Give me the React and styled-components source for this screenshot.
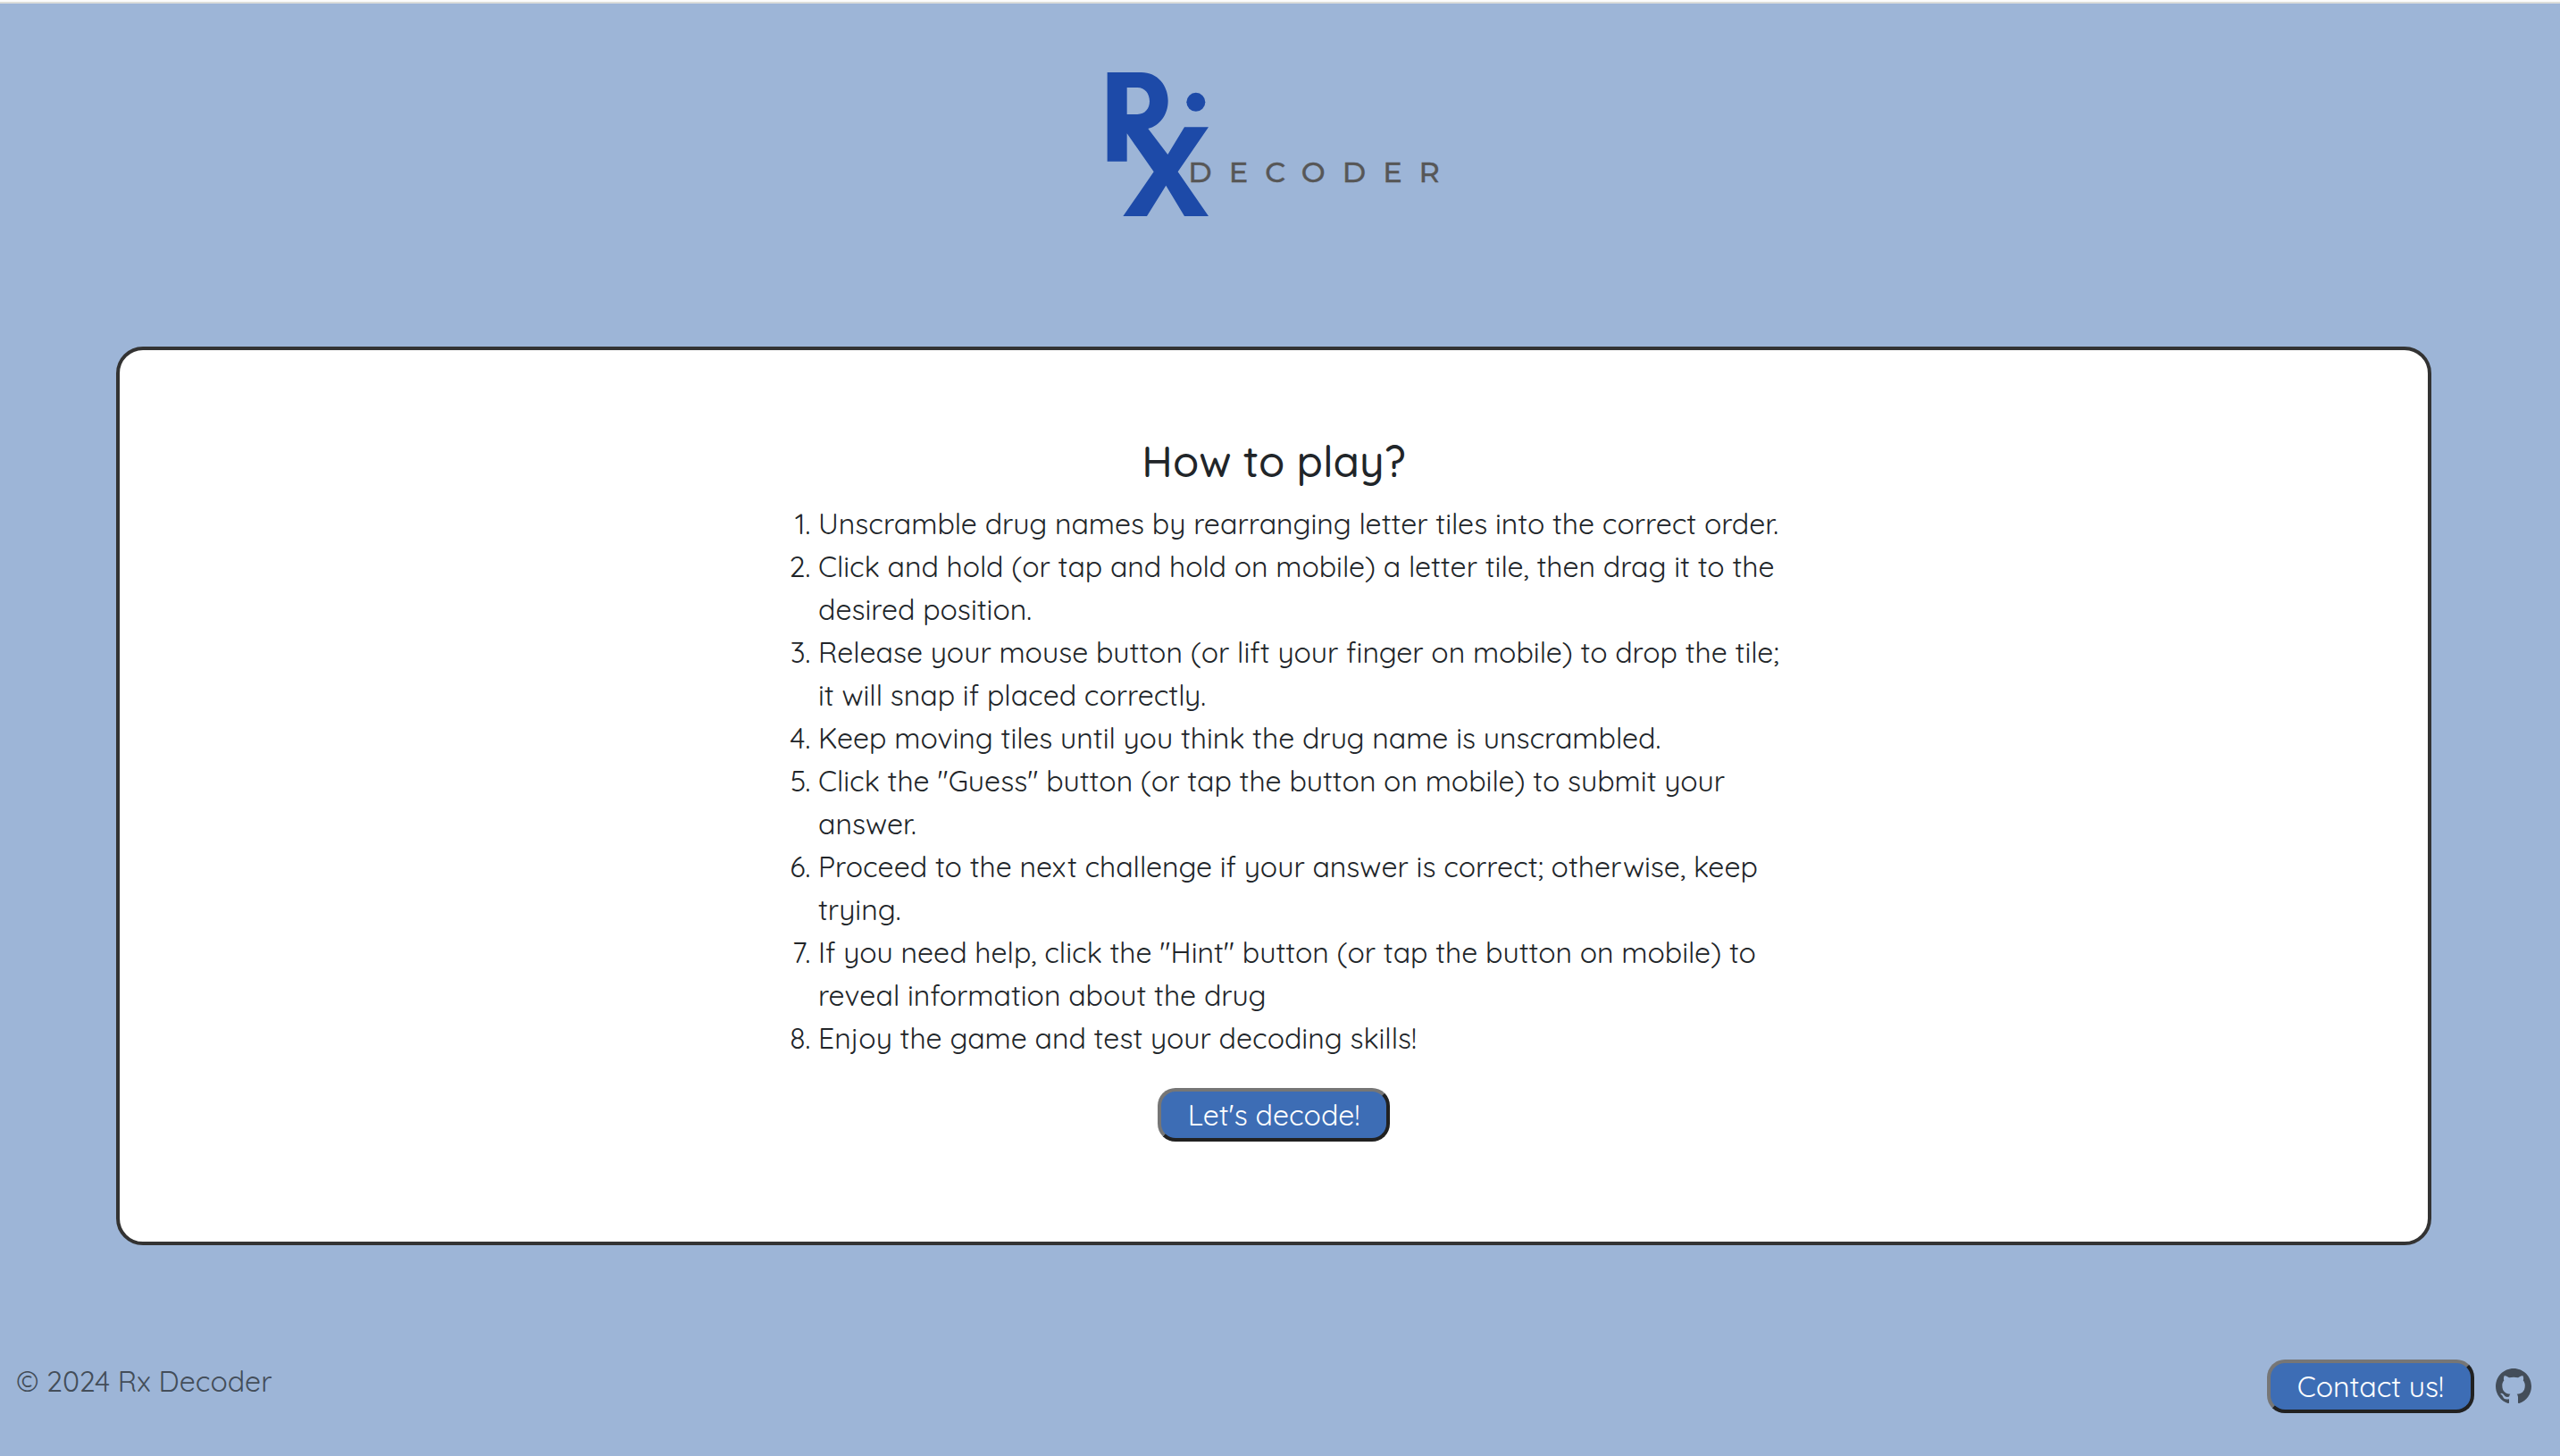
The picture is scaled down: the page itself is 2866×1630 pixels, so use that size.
import React from "react";
import styled, { createGlobalStyle } from "styled-components";

const GlobalStyle = createGlobalStyle`
  *, *::before, *::after { box-sizing: border-box; }
  body {
    margin: 0;
    background: #9db5d7;
    color: #212529;
    font-family: Quicksand, Lato, sans-serif;
    font-size: 32px;
    line-height: 48px;
  }
`;

const Page = styled.div`
  min-height: 100vh;
  display: flex;
  flex-direction: column;
  padding-right: 14px;
  border-top: 2px solid #fbfbfb;
  box-shadow: inset 0 2px 0 #dcddda;
`;

const Header = styled.header`
  display: flex;
  justify-content: center;
  padding: 78px 0 144px;
`;

const LogoMark = styled.svg`
  display: block;
  width: 376px;
  height: 164px;
  overflow: visible;
`;

const LogoText = styled.text`
  fill: #575757;
  stroke: #575757;
  stroke-width: 1px;
  font-family: Montserrat, Lato, sans-serif;
  font-size: 96px;
  font-weight: 500;
  letter-spacing: 57px;
`;

const Card = styled.main`
  display: flex;
  flex-direction: column;
  align-items: center;
  margin: 0 130px;
  padding: 96px 48px 112px;
  background: #fff;
  border: 4px solid #333;
  border-radius: 30px;
`;

const Title = styled.h1`
  margin: 0 0 18px;
  font-size: 48px;
  line-height: 56px;
  font-weight: 500;
`;

const Steps = styled.ol`
  width: 100%;
  max-width: 1148px;
  margin: 0 0 32px;
  padding-left: 64px;
`;

const Button = styled.button`
  height: 60px;
  padding: 0 30px;
  border: 4px solid;
  border-color: #767676 #212121 #212121 #767676;
  border-radius: 20px;
  background: #3d6db5;
  color: #fff;
  font: inherit;
  line-height: 48px;
  cursor: pointer;
`;

const Footer = styled.footer`
  display: flex;
  align-items: center;
  justify-content: space-between;
  padding: 128px 18px 48px;
`;

const Copyright = styled.p`
  margin: 0 0 12px;
  color: #434d59;
`;

const FooterActions = styled.div`
  display: flex;
  align-items: center;
  gap: 24px;
`;

const IconLink = styled.a`
  display: flex;
  color: #434d59;

  svg {
    width: 40px;
    height: 40px;
  }
`;

const steps = [
  "Unscramble drug names by rearranging letter tiles into the correct order.",
  "Click and hold (or tap and hold on mobile) a letter tile, then drag it to the desired position.",
  "Release your mouse button (or lift your finger on mobile) to drop the tile; it will snap if placed correctly.",
  "Keep moving tiles until you think the drug name is unscrambled.",
  'Click the "Guess" button (or tap the button on mobile) to submit your answer.',
  "Proceed to the next challenge if your answer is correct; otherwise, keep trying.",
  'If you need help, click the "Hint" button (or tap the button on mobile) to reveal information about the drug',
  "Enjoy the game and test your decoding skills!",
];

function Logo() {
  return (
    <LogoMark viewBox="84 60 1128 492" role="img" aria-label="Rx Decoder">
      <path
        fill="#1d4aa8"
        fillRule="evenodd"
        d="M89 63H203C258 63 293 108 293 158C293 205 265 242 226 252L292 339L348 247H429L326 397L429 546H348L286 443L222 546H142L245 397L155 268V362H89ZM155 114V204H190C216 204 231 184 231 160C231 135 216 114 190 114Z"
      />
      <circle cx="386.5" cy="163" r="31.5" fill="#1d4aa8" />
      <LogoText x="361" y="431">DECODER</LogoText>
    </LogoMark>
  );
}

function GithubIcon() {
  return (
    <svg viewBox="0 0 16 16" fill="currentColor" aria-hidden="true">
      <path d="M8 0C3.58 0 0 3.58 0 8c0 3.54 2.29 6.53 5.47 7.59.4.07.55-.17.55-.38 0-.19-.01-.82-.01-1.49-2.01.37-2.53-.49-2.69-.94-.09-.23-.48-.94-.82-1.13-.28-.15-.68-.52-.01-.53.63-.01 1.08.58 1.23.82.72 1.21 1.87.87 2.33.66.07-.52.28-.87.51-1.07-1.78-.2-3.64-.89-3.64-3.95 0-.87.31-1.59.82-2.15-.08-.2-.36-1.02.08-2.12 0 0 .67-.21 2.2.82.64-.18 1.32-.27 2-.27s1.36.09 2 .27c1.53-1.04 2.2-.82 2.2-.82.44 1.1.16 1.92.08 2.12.51.56.82 1.27.82 2.15 0 3.07-1.87 3.75-3.65 3.95.29.25.54.73.54 1.48 0 1.07-.01 1.93-.01 2.2 0 .21.15.46.55.38A8.01 8.01 0 0 0 16 8c0-4.42-3.58-8-8-8" />
    </svg>
  );
}

export default function App() {
  return (
    <>
      <GlobalStyle />
      <Page>
        <Header>
          <Logo />
        </Header>
        <Card>
          <Title>How to play?</Title>
          <Steps>
            {steps.map((step) => (
              <li key={step}>{step}</li>
            ))}
          </Steps>
          <Button type="button">Let's decode!</Button>
        </Card>
        <Footer>
          <Copyright>© 2024 Rx Decoder</Copyright>
          <FooterActions>
            <Button type="button">Contact us!</Button>
            <IconLink href="#github" aria-label="GitHub">
              <GithubIcon />
            </IconLink>
          </FooterActions>
        </Footer>
      </Page>
    </>
  );
}
